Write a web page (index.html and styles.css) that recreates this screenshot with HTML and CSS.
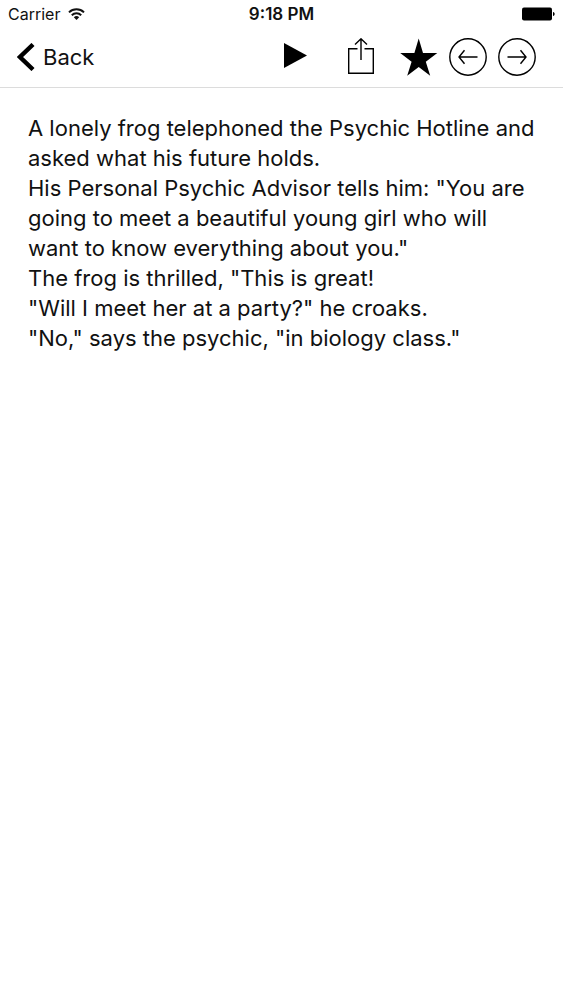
FILE: index.html
```
<!DOCTYPE html>
<html lang="en">
<head>
  <meta charset="utf-8">
  <meta name="viewport" content="width=device-width, initial-scale=1">
  <title>Joke</title>
  <link rel="stylesheet" href="styles.css">
</head>
<body>
  <div class="status-bar">
    <div class="carrier">
      <span>Carrier</span>
      <svg width="17" height="12" viewBox="0 0 17 12" fill="none" stroke="#111" stroke-width="2">
        <path d="M1 4.4a10.8 10.8 0 0 1 15 0"/>
        <path d="M3.8 7.2a6.7 6.7 0 0 1 9.4 0"/>
        <path d="M8.5 12L5.8 9.2a3.9 3.9 0 0 1 5.4 0z" fill="#111" stroke="none"/>
      </svg>
    </div>
    <div class="time">9:18 PM</div>
    <div class="battery">
      <svg width="33" height="14" viewBox="0 0 33 14">
        <rect x="0" y="0.5" width="30" height="13" rx="2"/>
        <path d="M31 5c2.2 0.5 2.2 3.5 0 4z"/>
      </svg>
    </div>
  </div>

  <header class="nav-bar">
    <button class="back">
      <svg width="18" height="28" viewBox="0 0 18 28" fill="none" stroke="#000" stroke-width="4.4">
        <path d="M16 1.5L3 14l13 12.5"/>
      </svg>
      <span>Back</span>
    </button>
    <div class="media">
      <button class="icon" aria-label="Play">
        <svg width="38" height="38" viewBox="0 0 38 38">
          <path d="M8 5l23 12.5L8 30z"/>
        </svg>
      </button>
      <button class="icon" aria-label="Share">
        <svg width="38" height="38" viewBox="0 0 38 38" fill="none" stroke="#000" stroke-width="1.4">
          <path d="M15.5 10.7H6.7v24.6h24.6V10.7h-8.8"/>
          <path d="M19 22V1M13 6.5L19 0.8l6 5.7"/>
        </svg>
      </button>
    </div>
    <div class="actions">
      <button class="icon" aria-label="Favorite">
        <svg width="38" height="38" viewBox="0 0 38 38">
          <path d="M18.7 0.5l4.3 14.4h14.3L25.8 23.7l4.4 14-11.5-8.6-11.5 8.6 4.4-14L0.2 14.9h14.2z"/>
        </svg>
      </button>
      <button class="icon" aria-label="Previous">
        <svg width="38" height="38" viewBox="0 0 38 38" fill="none" stroke="#000" stroke-width="1.4">
          <circle cx="19" cy="19" r="18.2"/>
          <path d="M28.5 19H10M15.5 12.2L10 19l5.5 6.8"/>
        </svg>
      </button>
      <button class="icon" aria-label="Next">
        <svg width="38" height="38" viewBox="0 0 38 38" fill="none" stroke="#000" stroke-width="1.4">
          <circle cx="19" cy="19" r="18.2"/>
          <path d="M9.5 19H28M22.5 12.2L28 19l-5.5 6.8"/>
        </svg>
      </button>
    </div>
  </header>

  <main class="joke">
    <p>A lonely frog telephoned the Psychic Hotline and asked what his future holds.</p>
    <p>His Personal Psychic Advisor tells him: "You are going to meet a beautiful young girl who will want to know everything about you."</p>
    <p>The frog is thrilled, "This is great!</p>
    <p>"Will I meet her at a party?" he croaks.</p>
    <p>"No," says the psychic, "in biology class."</p>
  </main>
</body>
</html>
```

FILE: styles.css
```
* {
  box-sizing: border-box;
}

body {
  margin: 0;
  background: #fff;
  color: #111;
  font-family: Inter, "Liberation Sans", sans-serif;
}

button {
  border: 0;
  padding: 0;
  background: none;
  color: inherit;
  font: inherit;
  cursor: pointer;
}

svg {
  display: block;
}

.status-bar {
  display: flex;
  align-items: center;
  height: 28px;
  padding: 0 8px;
  font-size: 16px;
  line-height: 28px;
}

.carrier,
.battery {
  display: flex;
  flex: 1;
  align-items: center;
}

.carrier {
  gap: 8px;
}

.battery {
  justify-content: flex-end;
}

.time {
  font-size: 17px;
  font-weight: 600;
}

.nav-bar {
  display: flex;
  align-items: center;
  height: 60px;
  padding: 0 27px 2px 17px;
  border-bottom: 1px solid #dcdcdc;
}

.back {
  display: flex;
  align-items: center;
  gap: 8px;
  margin-right: auto;
  font-size: 22px;
}

.media,
.actions {
  display: flex;
}

.media {
  gap: 28px;
  margin-right: 20px;
}

.actions {
  gap: 11px;
}

.joke {
  padding: 25px 28px;
  font-size: 22px;
  line-height: 30px;
}

.joke p {
  margin: 0;
}
```
